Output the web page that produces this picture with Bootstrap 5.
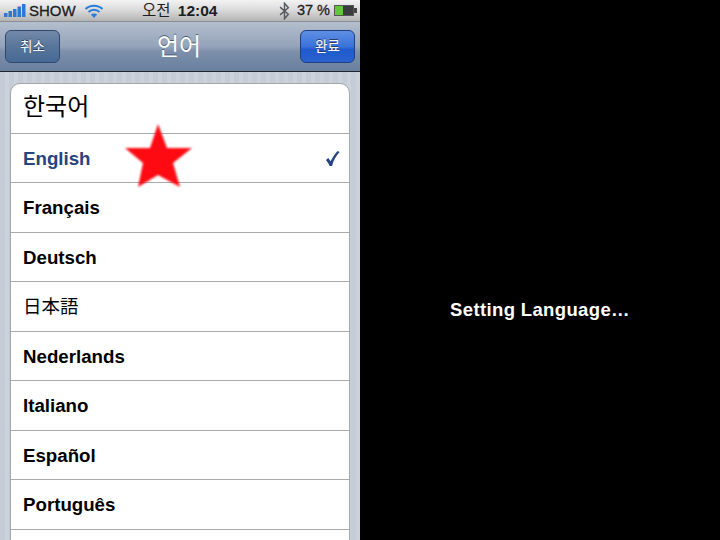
<!DOCTYPE html>
<html lang="ko">
<head>
  <meta charset="UTF-8">
  <title>언어</title>
  <link href="https://cdn.jsdelivr.net/npm/bootstrap@5.3.3/dist/css/bootstrap.min.css" rel="stylesheet">
  <style>
    html, body { width: 720px; height: 540px; overflow: hidden; background: #000; }
    body { font-family: "Liberation Sans", "Noto Sans CJK KR", sans-serif; }
    .phone-pane { width: 360px; height: 540px; overflow: hidden; background: repeating-linear-gradient(90deg, #c5ccd6 0 5px, #cbd2dc 5px 9px); }
    .black-pane { width: 360px; height: 540px; color: #fff; font-size: 18.5px; font-weight: 700; letter-spacing: .36px; padding-top: 80px; }
    .status-strip { height: 22px; padding: 0 3px 0 4px; font-size: 15px; color: #1d1d1f; background: linear-gradient(#f3f3f3, #dcdcdc 45%, #b4b4b4); border-bottom: 1px solid #8b8d90; line-height: 1; }
    .status-carrier { margin-left: -1px; -webkit-text-stroke: .3px #1d1d1f; }
    .status-clock { position: absolute; left: 142px; top: 3px; font-size: 15.5px; }
    .status-clock b { margin-left: 3px; }
    .status-batt { font-size: 14.5px; margin-left: 3px; -webkit-text-stroke: .3px #1d1d1f; }
    .top-bar { height: 50px; padding: 0 5px; background: linear-gradient(#b4bfce, #94a3b9 50%, #7d90ab 60%, #687f9e); border-bottom: 1px solid #20242c; }
    .top-title { font-size: 24px; color: #fff; text-shadow: 0 -1px 0 #4a5b75; position: absolute; left: -1px; width: 360px; text-align: center; top: 33px; line-height: 28px; }
    .bar-btn { width: 55px; height: 33px; border-radius: 6px; color: #fff; font-size: 13.5px; padding: 0; border: 1px solid #33496b; line-height: 31px; text-shadow: 0 -1px 0 #2b3f5e; }
    .btn-cancel { background: linear-gradient(#7389aa, #567498 55%, #466a96); }
    .btn-done { background: linear-gradient(#5f8fe4, #3a72da 50%, #1f5bcc 60%, #2a62cf); border-color: #1e3f80; }
    .btn-cancel:hover, .btn-done:hover { color: #fff; }
    .lang-list { margin: 11px 10px 0 10px; width: 340px; height: 520px; border: 1px solid #a4a6aa; border-radius: 10px; --bs-list-group-border-radius: 10px; background: #fff; display: block; }
    .lang-row { height: 49.5px; border: 0; border-bottom: 1px solid #a9abae; border-radius: 0; padding: 2px 12px 0; display: flex; align-items: center; justify-content: space-between; font-size: 18.7px; font-weight: 700; color: #000; background: transparent; }
    .lang-row.is-picked { color: #26447f; }
    .lang-row.is-cjk { font-weight: 400; font-size: 24px; padding: 0 12px 3px; }
    .lang-row.is-jp { font-weight: 400; font-size: 18.5px; padding-top: 1px; }
    .pick-check { margin-right: -3px; }
    .star-mark { position: absolute; left: 124px; top: 123px; filter: blur(1px); }
  </style>
</head>
<body>
<div class="d-flex position-relative">
  <div class="phone-pane position-relative">
    <div class="status-strip d-flex align-items-center">
      <svg width="22" height="13" viewBox="0 0 22 13" class="me-1"><g fill="#2f78d2"><rect x="0" y="9" width="3.500" height="4"/><rect x="4.500" y="7" width="3.500" height="6"/><rect x="9" y="5" width="3.500" height="8"/><rect x="13.500" y="2.500" width="3.500" height="10.500"/><rect x="18" y="0" width="3.500" height="13"/></g></svg>
      <span class="status-carrier">SHOW</span>
      <svg width="20" height="14" viewBox="0 0 20 14" class="ms-2"><g fill="none" stroke="#2a7fd6" stroke-width="2"><path d="M1.500 5 C6 0.500 14 0.500 18.500 5"/><path d="M4.500 8 C7.500 5 12.500 5 15.500 8"/></g><path d="M10 14 L6.800 10.500 C8.500 9 11.500 9 13.200 10.500 Z" fill="#2a7fd6"/></svg>
      <span class="status-clock">오전 <b>12:04</b></span>
      <span class="ms-auto d-flex align-items-center">
        <svg width="11" height="18" viewBox="0 0 10 16" class="me-1"><path d="M1 4.500 L8.500 11 L5 15 V1 L8.500 5 L1 11.500" fill="none" stroke="#55585c" stroke-width="1.300"/></svg>
        <span class="status-batt">37 %</span>
        <svg width="23" height="11" viewBox="0 0 23 11" class="ms-1"><rect x="0.500" y="0.500" width="19" height="10" fill="#3a3d40" stroke="#555"/><rect x="1" y="1" width="8" height="9" fill="#62c83a"/><rect x="20" y="3" width="3" height="5" fill="#444"/></svg>
      </span>
    </div>
    <div class="top-bar d-flex align-items-center justify-content-between">
      <button type="button" class="btn bar-btn btn-cancel">취소</button>
      <span class="top-title">언어</span>
      <button type="button" class="btn bar-btn btn-done">완료</button>
    </div>
    <div class="list-group lang-list">
      <div class="list-group-item lang-row is-cjk">한국어</div>
      <div class="list-group-item lang-row is-picked">English
        <svg class="pick-check" width="15" height="17" viewBox="0 0 16 17"><path d="M1 10 L3.500 8 L6 11.500 C8 7.500 10.500 3.500 13.500 0.500 L15.500 1.500 C11.500 6 9 10.500 7.500 16.500 L5 16.500 C4 14 2.500 12 1 10 Z" fill="#26447f"/></svg>
      </div>
      <div class="list-group-item lang-row">Français</div>
      <div class="list-group-item lang-row">Deutsch</div>
      <div class="list-group-item lang-row is-jp">日本語</div>
      <div class="list-group-item lang-row">Nederlands</div>
      <div class="list-group-item lang-row">Italiano</div>
      <div class="list-group-item lang-row">Español</div>
      <div class="list-group-item lang-row">Português</div>
      <div class="list-group-item lang-row"></div>
    </div>
    <svg class="star-mark" width="70" height="66" viewBox="0 0 70 66"><polygon points="34,1 43,25 68,25 49,40 56,64 34,52 14,64 19,40 1,25 26,25" fill="#fe0a12"/></svg>
  </div>
  <div class="black-pane d-flex align-items-center justify-content-center">Setting Language…</div>
</div>
<script src="https://cdn.jsdelivr.net/npm/bootstrap@5.3.3/dist/js/bootstrap.bundle.min.js"></script>
</body>
</html>
